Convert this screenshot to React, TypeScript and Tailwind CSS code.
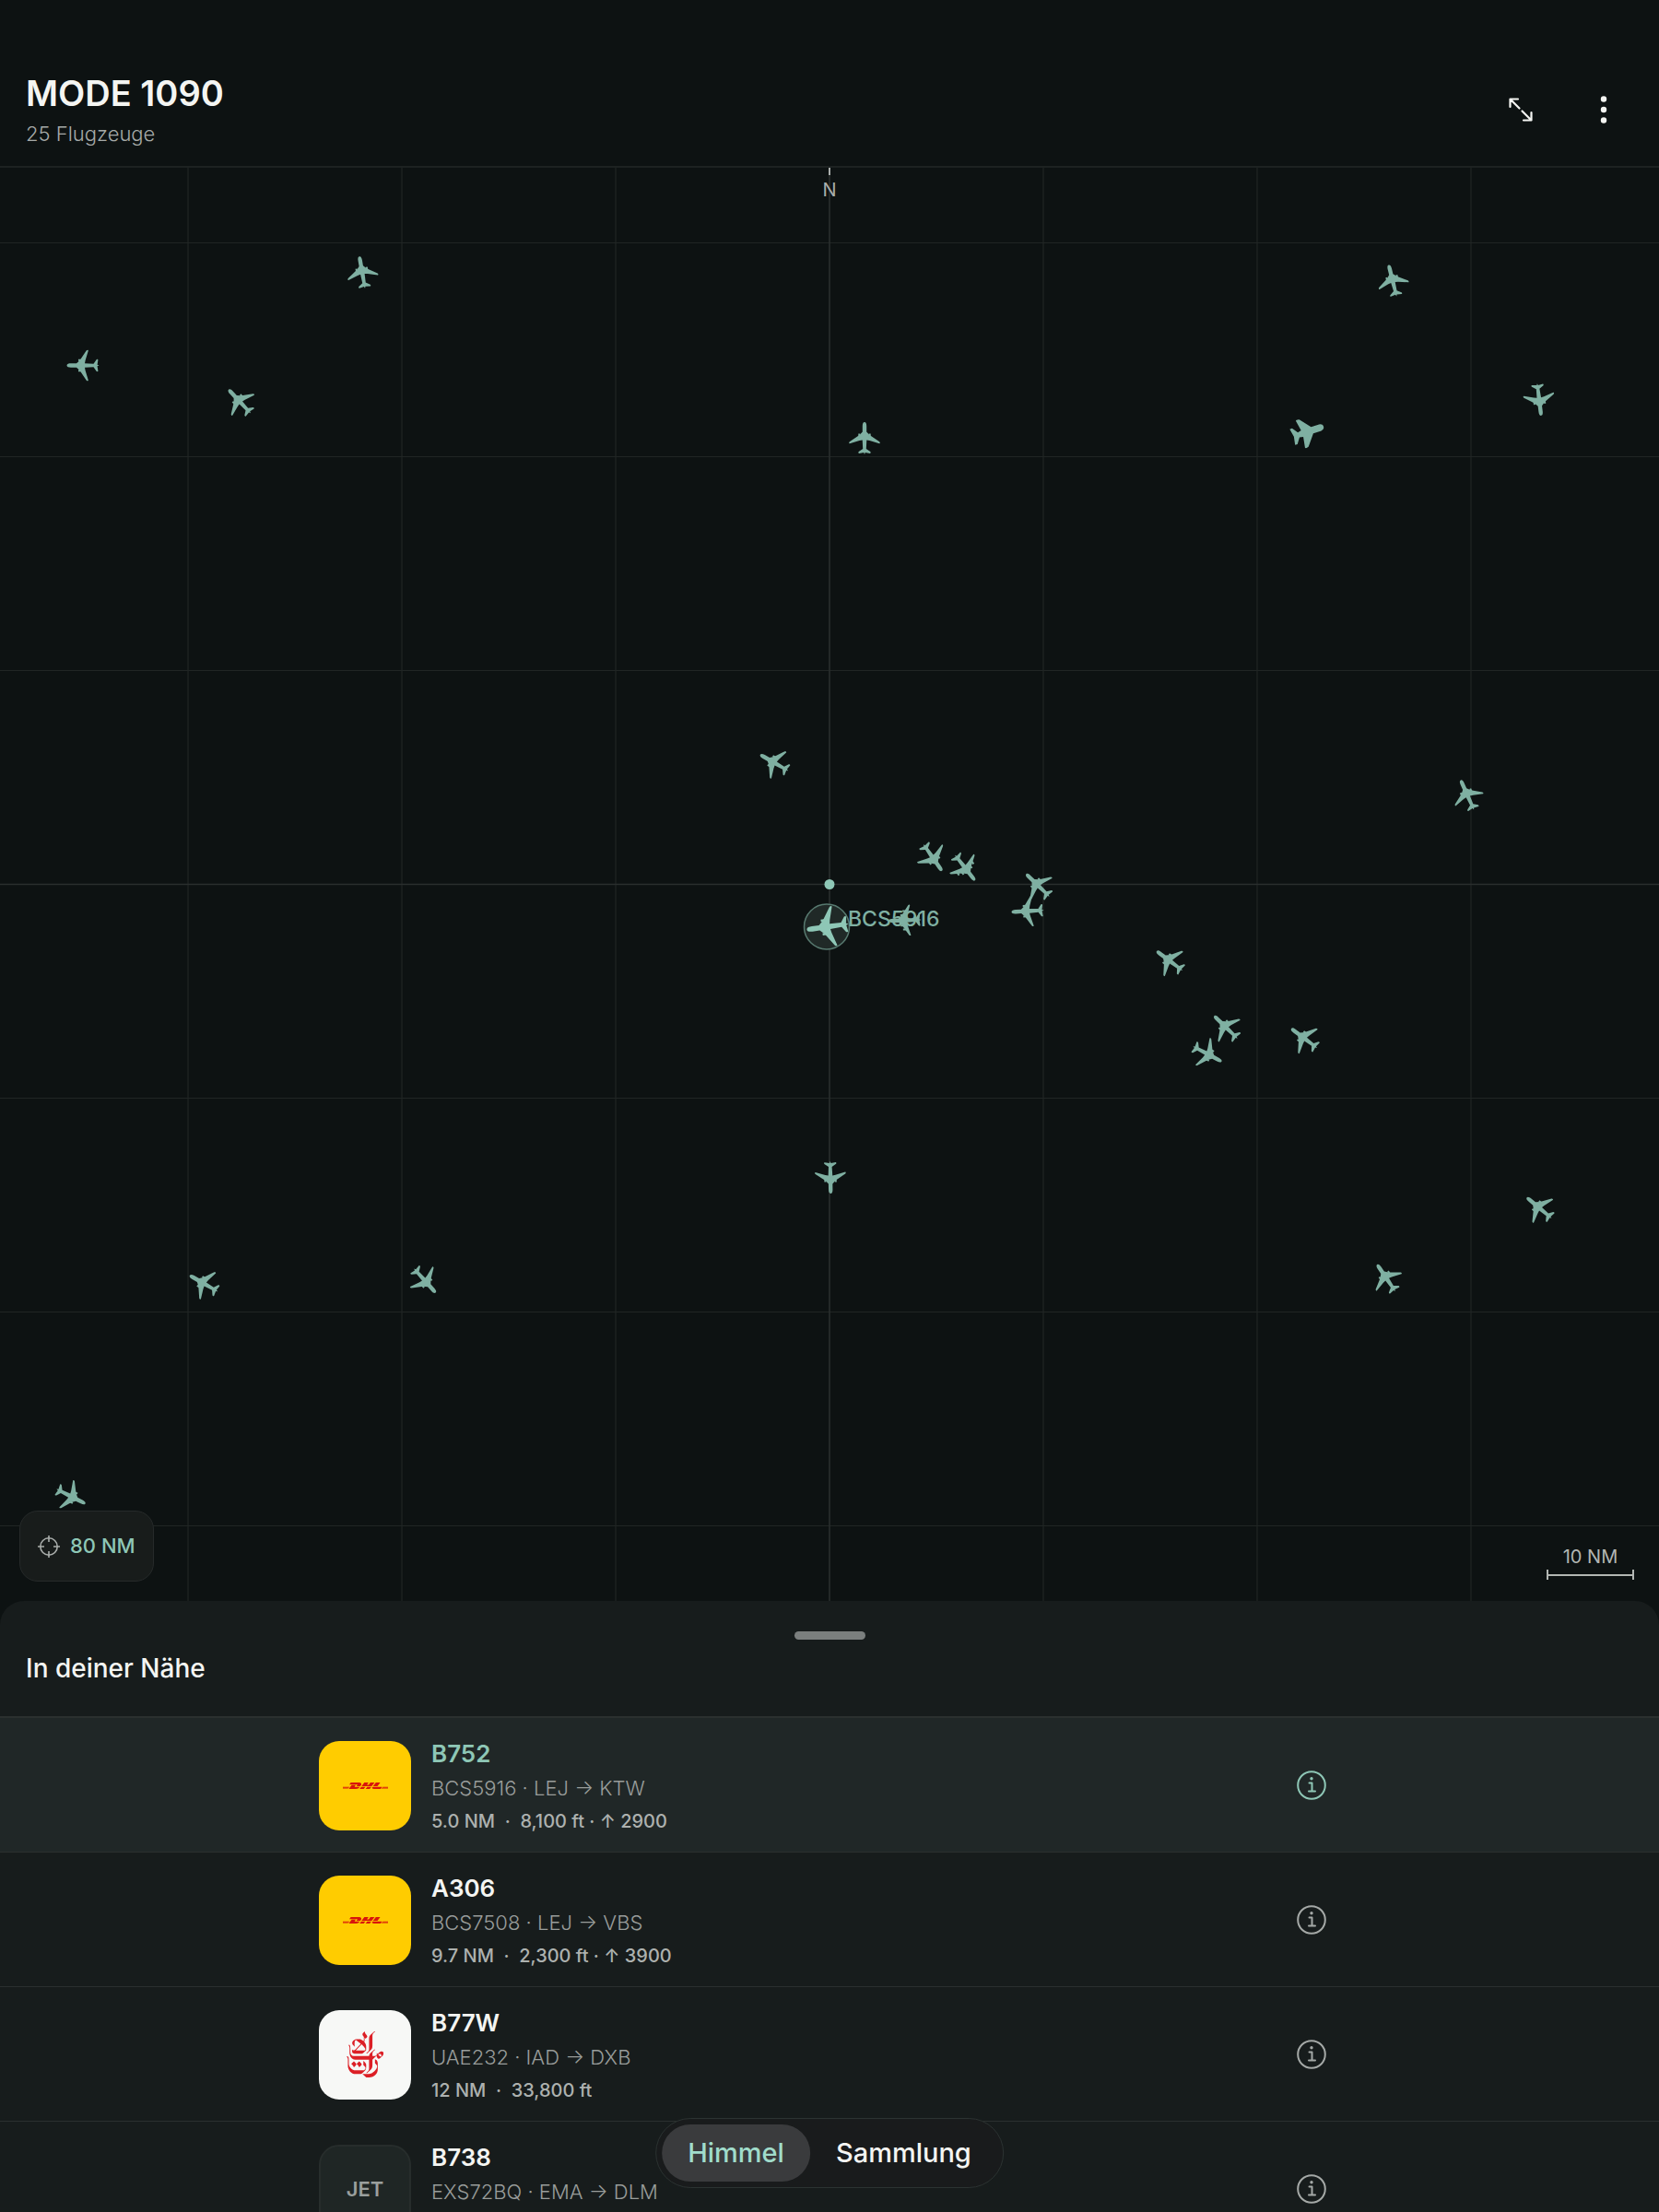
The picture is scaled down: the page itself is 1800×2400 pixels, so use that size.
import clsx from 'clsx';
import type { ReactNode } from 'react';
import { SiDhl, SiEmirates } from 'react-icons/si';

type Shape = 'twin' | 'quad' | 'stub';

type Aircraft = {
  // offset from the centre of the map
  x: number;
  y: number;
  heading: number;
  shape?: Shape;
};

const GRID = 232;
const gridSteps = [-6, -5, -4, -3, -2, -1, 1, 2, 3, 4, 5, 6];

const aircraft: Aircraft[] = [
  { x: -507, y: -664, heading: -10 },
  { x: -810, y: -563, heading: -90 },
  { x: -640, y: -524, heading: -43 },
  { x: 38, y: -484, heading: 0 },
  { x: 611, y: -655, heading: -14 },
  { x: 770, y: -526, heading: 173 },
  { x: 519, y: -491, heading: 71, shape: 'stub' },
  { x: -60, y: -132, heading: -60 },
  { x: 692, y: -97, heading: -24 },
  { x: 112, y: -29, heading: 145 },
  { x: 147, y: -18, heading: 142, shape: 'quad' },
  { x: 226, y: 1, heading: -46 },
  { x: 215, y: 29, heading: -93 },
  { x: 82, y: 39, heading: -92, shape: 'quad' },
  { x: 369, y: 83, heading: -53 },
  { x: 430, y: 155, heading: -46 },
  { x: 410, y: 184, heading: 118 },
  { x: 515, y: 167, heading: -53 },
  { x: 1, y: 318, heading: 179 },
  { x: 770, y: 351, heading: -50 },
  { x: 604, y: 427, heading: -34 },
  { x: -679, y: 433, heading: -60 },
  { x: -439, y: 430, heading: 138 },
  { x: -823, y: 664, heading: 117 },
];

type Flight = {
  type: string;
  route: string;
  details?: string;
  logo: 'dhl' | 'emirates' | 'jet';
  selected?: boolean;
};

const flights: Flight[] = [
  {
    type: 'B752',
    route: 'BCS5916 · LEJ → KTW',
    details: '5.0 NM  ·  8,100 ft · ↑ 2900',
    logo: 'dhl',
    selected: true,
  },
  {
    type: 'A306',
    route: 'BCS7508 · LEJ → VBS',
    details: '9.7 NM  ·  2,300 ft · ↑ 3900',
    logo: 'dhl',
  },
  {
    type: 'B77W',
    route: 'UAE232 · IAD → DXB',
    details: '12 NM  ·  33,800 ft',
    logo: 'emirates',
  },
  {
    type: 'B738',
    route: 'EXS72BQ · EMA → DLM',
    logo: 'jet',
  },
];

export default function App() {
  return (
    <div className="flex h-screen flex-col overflow-hidden bg-[#0d1212] font-['Inter',sans-serif] text-[#f4f5f2]">
      <Header />
      <SkyMap />
      <NearbySheet />
      <TabBar />
    </div>
  );
}

function Header() {
  return (
    <header className="flex items-end justify-between border-b-2 border-[#1d2221] px-7 pt-[79px] pb-[21px]">
      <div>
        <h1 className="text-[38px] leading-[44px] font-semibold">MODE 1090</h1>
        <p className="mt-2 text-[22px] leading-7 font-light text-[#a6aaa8]">
          25 Flugzeuge
        </p>
      </div>
      <div className="mb-1 flex gap-[18px]">
        <button type="button" aria-label="Vollbild" className="grid h-18 w-18 place-items-center">
          <svg viewBox="0 0 26 26" className="size-[26px]" fill="none" stroke="currentColor" strokeWidth="2.2" strokeLinecap="round" strokeLinejoin="round">
            <path d="M1.500 10V1.500H10M2 2l9.500 9.500M24.500 16v8.500H16M24 24l-9.500-9.500" />
          </svg>
        </button>
        <button type="button" aria-label="Mehr" className="-mr-1 grid h-18 w-18 place-items-center">
          <svg viewBox="0 0 8 30" className="h-[30px] w-2" fill="currentColor">
            <circle cx="4" cy="3.500" r="3.200" />
            <circle cx="4" cy="15" r="3.200" />
            <circle cx="4" cy="26.500" r="3.200" />
          </svg>
        </button>
      </div>
    </header>
  );
}

function SkyMap() {
  return (
    <main className="relative min-h-0 flex-1 overflow-hidden">
      <svg className="absolute inset-0 size-full" aria-label="Flugzeuge in der Umgebung" role="img">
        <svg x="50%" y="50%" overflow="visible">
          <g stroke="#202524" strokeWidth="1.200">
            {gridSteps.map((step) => (
              <line key={`v${step}`} x1={step * GRID} x2={step * GRID} y1="-2000" y2="2000" />
            ))}
            {gridSteps.map((step) => (
              <line key={`h${step}`} y1={step * GRID} y2={step * GRID} x1="-2000" x2="2000" />
            ))}
          </g>
          <g stroke="#2a2f2e" strokeWidth="1.600">
            <line x1="0" x2="0" y1="-2000" y2="2000" />
            <line y1="0" y2="0" x1="-2000" x2="2000" />
          </g>
          <circle r="5.500" fill="#8ec7b6" />
          <g fill="#7fb0a2">
            {aircraft.map((plane, index) => (
              <Plane key={index} {...plane} />
            ))}
          </g>
          <circle cx="-3" cy="46" r="24.500" fill="#202927" stroke="#57796f" strokeWidth="1.500" />
          <g fill="#8ec7b6">
            <Plane x={-2} y={46} heading={-98} scale={1.3} />
          </g>
          <text x="20" y="45" fontSize="23" fontWeight="500" fill="#7fb0a2">
            BCS5916
          </text>
        </svg>
      </svg>

      <div className="relative flex h-full flex-col items-center justify-between">
        <div className="flex flex-col items-center gap-1">
          <span className="h-2 w-[2px] bg-[#a9adab]" />
          <span className="text-xl leading-6 text-[#a9adab]">N</span>
        </div>
        <div className="flex w-full items-end justify-between px-[21px] pb-[21px]">
          <button
            type="button"
            className="flex h-[77px] items-center gap-[11px] rounded-[20px] border border-[#262a2a] bg-[#181c1b] px-[19px] text-[22px] font-medium text-[#8ec7b6]"
          >
            <svg viewBox="0 0 24 24" className="size-6" fill="none" stroke="#a9adab" strokeWidth="1.600">
              <circle cx="12" cy="12" r="9.200" />
              <path d="M12 0v7M12 17v7M0 12h7M17 12h7" />
            </svg>
            80 NM
          </button>
          <div className="mr-[6px] mb-[2px] flex w-[95px] flex-col items-center text-[#b2b6b3]">
            <span className="text-xl">10 NM</span>
            <span className="flex h-[11px] w-full items-center border-x-2 border-current">
              <span className="h-[2px] w-full bg-current" />
            </span>
          </div>
        </div>
      </div>
    </main>
  );
}

// Silhouettes point north and span about 34 units around the origin.
function Plane({ x, y, heading, shape = 'twin', scale = 1 }: Aircraft & { scale?: number }) {
  return (
    <g transform={`translate(${x} ${y}) rotate(${heading}) scale(${scale})`}>
      {shape === 'stub' ? (
        <path d="M0-18c2.700 0 3.700 2.500 3.700 5.500V-5L15.500 4.500c1 1 .8 4-.2 4L3.700 6.500 2.800 10.500 9 15v2.700L0 16l-9 1.700V15L-2.800 10.500-3.700 6.500-15.300 8.500c-1 0-1.200-3-.2-4L-3.700-5v-7.500C-3.700-15.500-2.700-18 0-18Z" />
      ) : (
        <>
          <path d="M0-17.500c1.600 0 2.200 2 2.200 4.500v6L5.500-3.400 16.200 3.800c.9.800.7 2.200-.1 2L5.500 2.600 2.300 2 1.800 11.500 6.300 14.600c.6.600.4 1.900-.3 1.800L.8 15.600 0 17.500-.8 15.600-6 16.400c-.7.100-.9-1.200-.3-1.800L-1.800 11.500-2.300 2-5.500 2.600-16.100 5.800c-.8.200-1-1.200-.1-2L-5.500-3.400-2.200-7v-6C-2.200-15.500-1.600-17.500 0-17.500Z" />
          <path d="M4.700-5h2v4h-2zM-6.700-5h2v4h-2z" />
          {shape === 'quad' && <path d="M9-2.500h2v4H9zM-11-2.500h2v4h-2z" />}
        </>
      )}
    </g>
  );
}

function NearbySheet() {
  return (
    <section className="h-[calc(30vh-57px)] shrink-0 overflow-hidden rounded-t-[26px] bg-[#171c1c]">
      <div className="flex flex-col border-b-2 border-[#2b302f] px-7 pt-[33px] pb-8">
        <span className="h-[9px] w-[77px] self-center rounded-full bg-[#7b7f7e]" />
        <h2 className="mt-[11px] text-[28px] leading-10 font-medium">In deiner Nähe</h2>
      </div>
      <ul>
        {flights.map((flight) => (
          <FlightRow key={flight.type} {...flight} />
        ))}
      </ul>
    </section>
  );
}

function FlightRow({ type, route, details, logo, selected }: Flight) {
  return (
    <li className={clsx('border-b border-[#2b302f] pt-4 pb-[15px]', selected && 'bg-[#202727]')}>
      <div className="mx-auto flex max-w-[1108px] items-center">
        <AirlineTile logo={logo} />
        <div className="ml-[22px] min-h-[114px] flex-1 pt-1">
          <h3 className={clsx('text-[26px] leading-[38px] font-semibold', selected && 'text-[#8ec7b6]')}>
            {type}
          </h3>
          <p className="text-[22px] leading-9 font-light text-[#999d9b]">{route}</p>
          {details && (
            <p className="text-xl leading-9 font-medium whitespace-pre text-[#adb1af]">{details}</p>
          )}
        </div>
        <button
          type="button"
          aria-label={`Details zu ${type}`}
          className={clsx(
            'grid size-[62px] place-items-center',
            selected ? 'text-[#8ec7b6]' : 'text-[#a5a9a7]',
          )}
        >
          <svg viewBox="0 0 32 32" className="size-8" fill="none" stroke="currentColor" strokeWidth="2" strokeLinecap="round" strokeLinejoin="round">
            <circle cx="16" cy="16" r="14.800" />
            <path d="M13.500 13.500h3v9M13 22.500h7" />
            <circle cx="16" cy="8.800" r="1.700" fill="currentColor" stroke="none" />
          </svg>
        </button>
      </div>
    </li>
  );
}

function AirlineTile({ logo }: { logo: Flight['logo'] }) {
  if (logo === 'dhl') {
    return (
      <Tile className="bg-[#ffcc00] text-[#d8150c]">
        <SiDhl className="size-[49px]" aria-label="DHL" />
      </Tile>
    );
  }
  if (logo === 'emirates') {
    return (
      <Tile className="bg-[#f7f8f6] text-[#dc1f26]">
        <SiEmirates className="size-[50px]" aria-label="Emirates" />
      </Tile>
    );
  }
  return (
    <Tile className="border-2 border-[#272d2c] bg-[#1f2625] text-[22px] font-semibold text-[#9a9f9d]">
      JET
    </Tile>
  );
}

function Tile({ className, children }: { className: string; children: ReactNode }) {
  return (
    <div className={clsx('grid h-[97px] w-[100px] place-items-center rounded-[22px]', className)}>
      {children}
    </div>
  );
}

function TabBar() {
  return (
    <nav className="fixed bottom-[26px] left-1/2 flex -translate-x-1/2 rounded-full border border-[#2c3332] bg-[#191b1c] p-[6px] text-[29px] font-medium">
      <button type="button" aria-current="page" className="h-[62px] rounded-full bg-[#3a3b3d] px-7 text-[#a0dccb]">
        Himmel
      </button>
      <button type="button" className="h-[62px] rounded-full px-7">
        Sammlung
      </button>
    </nav>
  );
}
